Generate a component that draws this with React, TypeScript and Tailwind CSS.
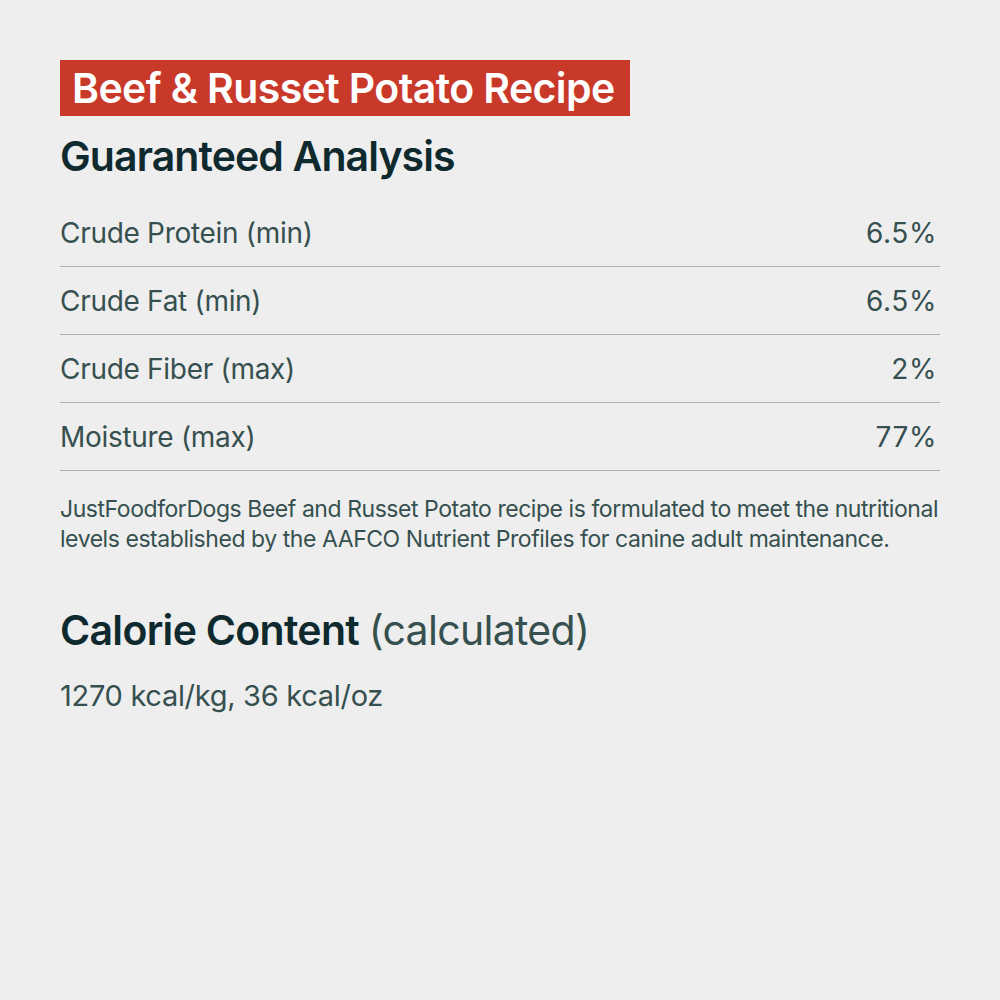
import React from "react";

const rows = [
  ["Crude Protein (min)", "6.5%"],
  ["Crude Fat (min)", "6.5%"],
  ["Crude Fiber (max)", "2%"],
  ["Moisture (max)", "77%"],
];

export default function App() {
  return (
    <div
      className="w-[1000px] h-[1000px] bg-[#eeeeee] px-[60px] pt-[60px]"
      style={{ fontFamily: 'Inter, "Liberation Sans", Arial, sans-serif' }}
    >
      <div className="inline-flex h-[56px] items-center bg-[#c9392a] pl-[12px] pr-[15px]">
        <span className="text-[41px] font-semibold text-white tracking-[-0.6px] leading-none">
          Beef &amp; Russet Potato Recipe
        </span>
      </div>
      <h2 className="mt-[16px] text-[41px] font-semibold leading-[48px] text-[#0f2a2e] tracking-[-0.9px]">
        Guaranteed Analysis
      </h2>
      <div className="mt-[19px] w-[880px]">
        {rows.map(([k, v]) => (
          <div
            key={k}
            className="flex h-[68px] items-center justify-between border-b border-[#a9b3b3] text-[28px] text-[#36504f] tracking-[-0.3px]"
          >
            <span>{k}</span>
            <span className="pr-[3px] tracking-[0.6px]">{v}</span>
          </div>
        ))}
      </div>
      <p className="mt-[23px] w-[885px] text-[23px] leading-[30px] text-[#36504f] tracking-[-0.45px]">
        JustFoodforDogs Beef and Russet Potato recipe is formulated to meet the nutritional levels
        established by the AAFCO Nutrient Profiles for canine adult maintenance.
      </p>
      <h2 className="mt-[52px] text-[41px] font-semibold leading-[48px] text-[#0f2a2e] tracking-[-0.7px]">
        Calorie Content <span className="font-normal text-[#36504f]">(calculated)</span>
      </h2>
      <p className="mt-[20px] text-[29px] text-[#36504f] tracking-[-0.3px]">1270 kcal/kg, 36 kcal/oz</p>
    </div>
  );
}
